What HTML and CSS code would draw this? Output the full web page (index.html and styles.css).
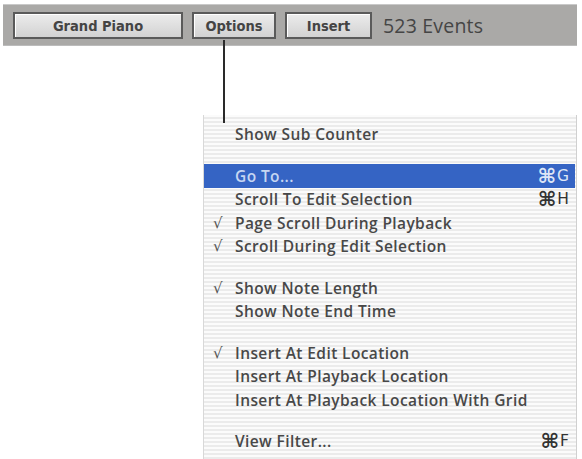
FILE: index.html
```html
<!DOCTYPE html>
<html lang="en">
<head>
  <meta charset="UTF-8">
  <title>Options Menu</title>
  <link rel="stylesheet" href="styles.css">
</head>
<body>

  <div class="toolbar">
    <button class="tool-btn btn-wide">Grand Piano</button>
    <button class="tool-btn btn-options">Options</button>
    <button class="tool-btn btn-insert">Insert</button>
    <span class="event-count">523 Events</span>
  </div>

  <div class="callout"></div>

  <ul class="menu">
    <li class="item"><span class="check"></span><span class="label">Show Sub Counter</span></li>
    <li class="sep"></li>
    <li class="item active"><span class="check"></span><span class="label">Go To...</span><span class="key"><span class="cmd">⌘</span>G</span></li>
    <li class="item"><span class="check"></span><span class="label">Scroll To Edit Selection</span><span class="key"><span class="cmd">⌘</span>H</span></li>
    <li class="item"><span class="check">√</span><span class="label">Page Scroll During Playback</span></li>
    <li class="item"><span class="check">√</span><span class="label">Scroll During Edit Selection</span></li>
    <li class="sep"></li>
    <li class="item"><span class="check">√</span><span class="label">Show Note Length</span></li>
    <li class="item"><span class="check"></span><span class="label">Show Note End Time</span></li>
    <li class="sep"></li>
    <li class="item"><span class="check">√</span><span class="label">Insert At Edit Location</span></li>
    <li class="item"><span class="check"></span><span class="label">Insert At Playback Location</span></li>
    <li class="item"><span class="check"></span><span class="label">Insert At Playback Location With Grid</span></li>
    <li class="sep"></li>
    <li class="item"><span class="check"></span><span class="label">View Filter...</span><span class="key"><span class="cmd">⌘</span>F</span></li>
  </ul>

</body>
</html>
```

FILE: styles.css
```css
body {
  margin: 0;
  background: #fff;
  font-family: 'Open Sans', 'DejaVu Sans', sans-serif;
  position: relative;
}
.toolbar {
  display: flex;
  align-items: center;
  gap: 9px;
  height: 42px;
  margin: 4px 5px 0 3px;
  padding-left: 10px;
  box-sizing: border-box;
  background: #aaa9a7;
  border-top: 1px solid #c9c9c9;
  border-bottom: 1px solid #bcbcbc;
}
.tool-btn {
  height: 27px;
  padding: 0;
  border: 2px solid #5a5a5a;
  background: linear-gradient(#ececec, #d2d2d2);
  box-shadow: inset 1px 1px 0 #fff;
  font-family: 'DejaVu Sans Condensed', 'DejaVu Sans', sans-serif;
  font-size: 14.5px;
  font-weight: bold;
  color: #444;
  margin-top: 1px;
}
.btn-wide {
  width: 170px;
}
.btn-options {
  width: 84px;
}
.btn-insert {
  width: 87px;
}
.event-count {
  margin-left: 2px;
  font-size: 19.5px;
  color: #454545;
  letter-spacing: 0.2px;
}
.callout {
  position: absolute;
  left: 223px;
  top: 40px;
  width: 2px;
  height: 83px;
  background: #2a2a2a;
  z-index: 2;
}
.menu {
  list-style: none;
  margin: 69px 0 0 203px;
  padding: 7px 0 6px;
  width: 374px;
  box-sizing: border-box;
  background: repeating-linear-gradient(to bottom, #fbfbfb 0, #fbfbfb 2px, #ebebeb 2px, #ebebeb 4px);
  border-left: 1px solid #d8d8d8;
  border-right: 1px solid #d0d0d0;
}
.item {
  display: flex;
  align-items: center;
  height: 23.3px;
  margin-right: 1px;
  font-size: 15.5px;
  font-weight: 600;
  letter-spacing: 0.4px;
  color: #484848;
}
.check {
  width: 31px;
  padding-left: 9px;
  box-sizing: border-box;
  font-family: 'DejaVu Sans', sans-serif;
  font-weight: normal;
  font-size: 15px;
  color: #555;
}
.label {
  flex: 1;
}
.key {
  display: flex;
  align-items: center;
  padding-right: 6px;
  font-family: 'DejaVu Sans', sans-serif;
  font-size: 15.5px;
  font-weight: normal;
  letter-spacing: 0;
  color: #333;
}
.cmd {
  font-size: 20px;
  font-weight: bold;
  line-height: 1;
  margin-right: 1px;
}
.item.active {
  background: #3564c4;
  color: #c6d6f2;
  height: 24px;
}
.item.active .key {
  color: #dde6f6;
}
.sep {
  height: 18.5px;
}
```
